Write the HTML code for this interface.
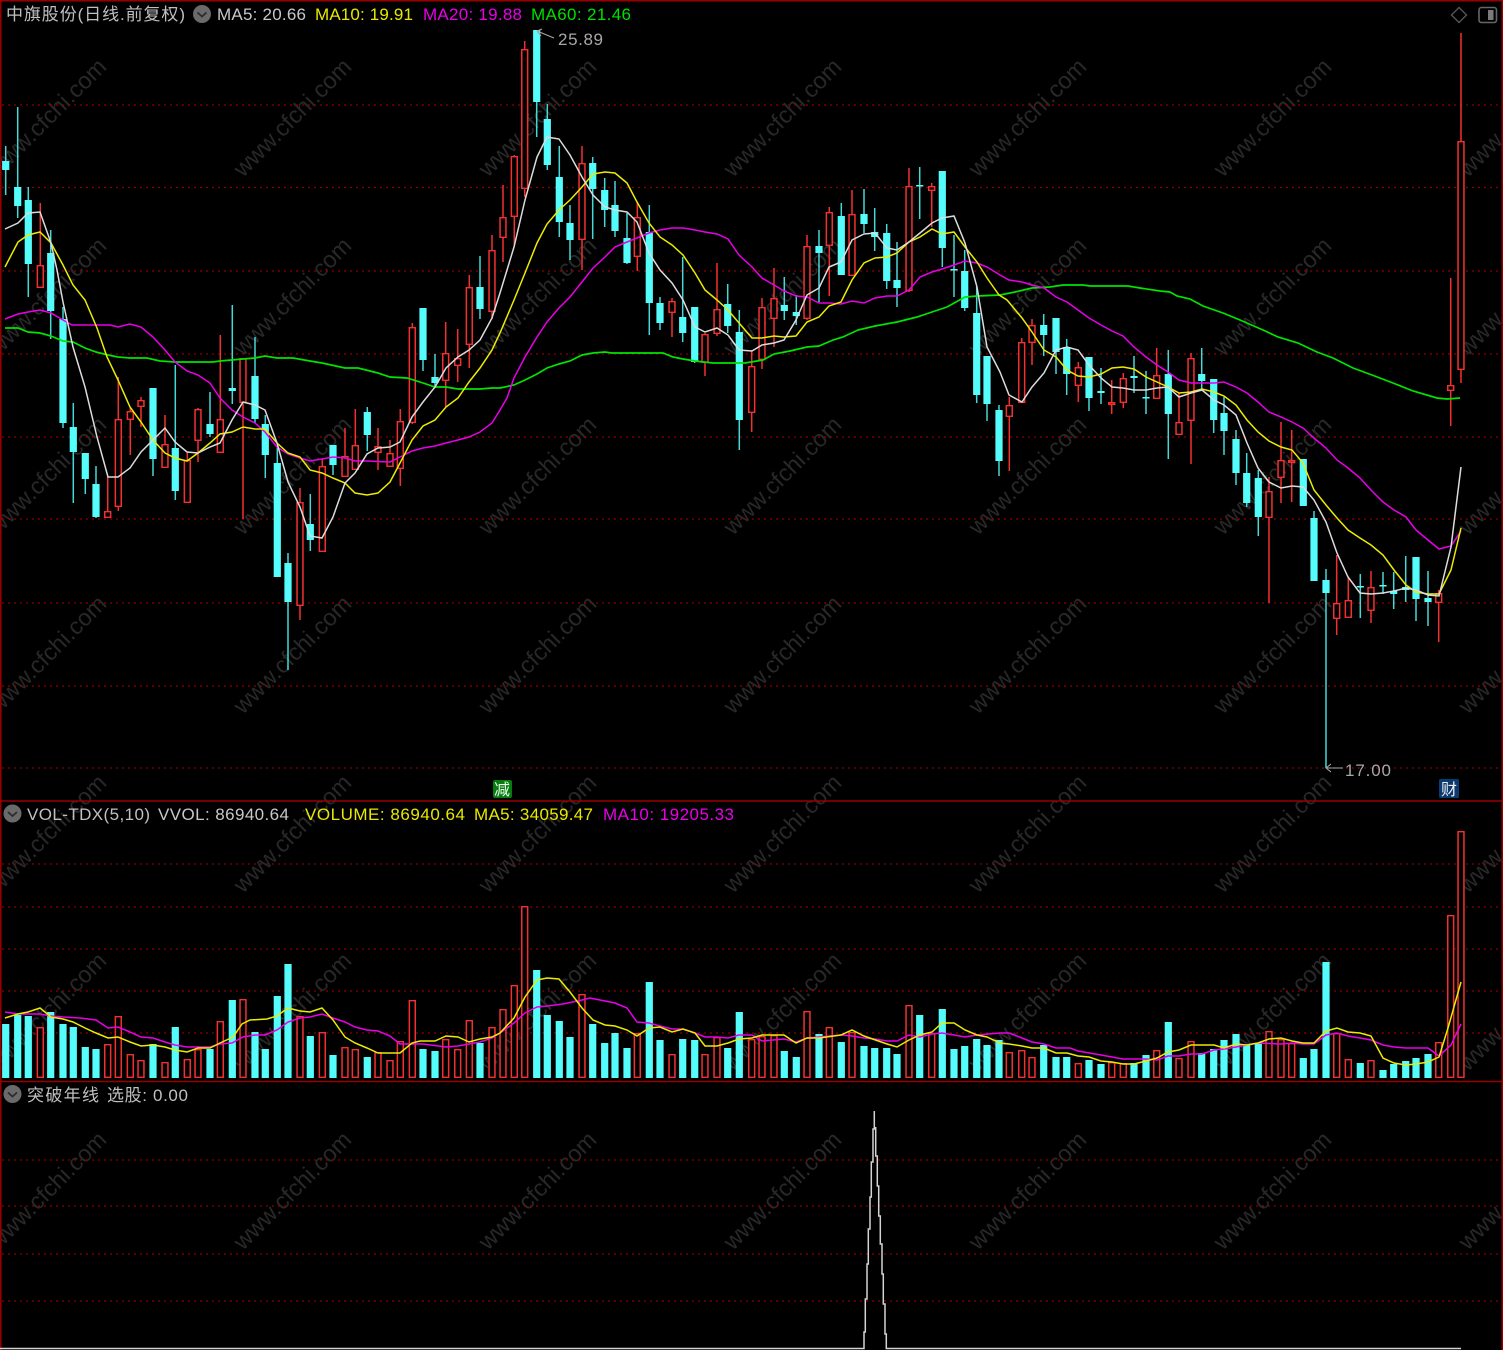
<!DOCTYPE html>
<html><head><meta charset="utf-8"><title>中旗股份</title>
<style>
html,body{margin:0;padding:0;background:#000;width:1503px;height:1350px;overflow:hidden}
svg{display:block;filter:blur(.25px)}
text{font-family:"Liberation Sans","Noto Sans CJK SC",sans-serif;font-size:17px}
.wm text{font-size:23.5px;fill:#282828}
.grid path{stroke:#8c0000;stroke-width:1.3;stroke-dasharray:2 4;fill:none}
</style></head><body>
<svg width="1503" height="1350" viewBox="0 0 1503 1350" xmlns="http://www.w3.org/2000/svg">
<rect width="1503" height="1350" fill="#000"/>
<g class="wm">
<text transform="translate(-2 178) rotate(-45)">www.cfchi.com</text><text transform="translate(243 178) rotate(-45)">www.cfchi.com</text><text transform="translate(488 178) rotate(-45)">www.cfchi.com</text><text transform="translate(733 178) rotate(-45)">www.cfchi.com</text><text transform="translate(978 178) rotate(-45)">www.cfchi.com</text><text transform="translate(1223 178) rotate(-45)">www.cfchi.com</text><text transform="translate(1468 178) rotate(-45)">www.cfchi.com</text>
<text transform="translate(-2 357) rotate(-45)">www.cfchi.com</text><text transform="translate(243 357) rotate(-45)">www.cfchi.com</text><text transform="translate(488 357) rotate(-45)">www.cfchi.com</text><text transform="translate(733 357) rotate(-45)">www.cfchi.com</text><text transform="translate(978 357) rotate(-45)">www.cfchi.com</text><text transform="translate(1223 357) rotate(-45)">www.cfchi.com</text><text transform="translate(1468 357) rotate(-45)">www.cfchi.com</text>
<text transform="translate(-2 536) rotate(-45)">www.cfchi.com</text><text transform="translate(243 536) rotate(-45)">www.cfchi.com</text><text transform="translate(488 536) rotate(-45)">www.cfchi.com</text><text transform="translate(733 536) rotate(-45)">www.cfchi.com</text><text transform="translate(978 536) rotate(-45)">www.cfchi.com</text><text transform="translate(1223 536) rotate(-45)">www.cfchi.com</text><text transform="translate(1468 536) rotate(-45)">www.cfchi.com</text>
<text transform="translate(-2 715) rotate(-45)">www.cfchi.com</text><text transform="translate(243 715) rotate(-45)">www.cfchi.com</text><text transform="translate(488 715) rotate(-45)">www.cfchi.com</text><text transform="translate(733 715) rotate(-45)">www.cfchi.com</text><text transform="translate(978 715) rotate(-45)">www.cfchi.com</text><text transform="translate(1223 715) rotate(-45)">www.cfchi.com</text><text transform="translate(1468 715) rotate(-45)">www.cfchi.com</text>
<text transform="translate(-2 894) rotate(-45)">www.cfchi.com</text><text transform="translate(243 894) rotate(-45)">www.cfchi.com</text><text transform="translate(488 894) rotate(-45)">www.cfchi.com</text><text transform="translate(733 894) rotate(-45)">www.cfchi.com</text><text transform="translate(978 894) rotate(-45)">www.cfchi.com</text><text transform="translate(1223 894) rotate(-45)">www.cfchi.com</text><text transform="translate(1468 894) rotate(-45)">www.cfchi.com</text>
<text transform="translate(-2 1072) rotate(-45)">www.cfchi.com</text><text transform="translate(243 1072) rotate(-45)">www.cfchi.com</text><text transform="translate(488 1072) rotate(-45)">www.cfchi.com</text><text transform="translate(733 1072) rotate(-45)">www.cfchi.com</text><text transform="translate(978 1072) rotate(-45)">www.cfchi.com</text><text transform="translate(1223 1072) rotate(-45)">www.cfchi.com</text><text transform="translate(1468 1072) rotate(-45)">www.cfchi.com</text>
<text transform="translate(-2 1251) rotate(-45)">www.cfchi.com</text><text transform="translate(243 1251) rotate(-45)">www.cfchi.com</text><text transform="translate(488 1251) rotate(-45)">www.cfchi.com</text><text transform="translate(733 1251) rotate(-45)">www.cfchi.com</text><text transform="translate(978 1251) rotate(-45)">www.cfchi.com</text><text transform="translate(1223 1251) rotate(-45)">www.cfchi.com</text><text transform="translate(1468 1251) rotate(-45)">www.cfchi.com</text>
</g>
<g class="grid"><path d="M2 105H1503M2 187.5H1503M2 271H1503M2 354H1503M2 437H1503M2 519H1503M2 603H1503M2 686H1503M2 768H1503M2 864H1503M2 907H1503M2 949H1503M2 991H1503M2 1033H1503M2 1160H1503M2 1206H1503M2 1254H1503M2 1301H1503"/></g>

<!-- borders -->
<path d="M0 .7H1503M.7 0V1350M1502.3 0V1350M0 801H1503M0 1081.5H1503" stroke="#980000" stroke-width="1.6" fill="none"/>

<!-- candle wicks -->
<path fill="none" stroke="#45d8d8" stroke-width="1.5" d="M5.7 146V195M17.7 107V218M28.3 187V297M50.7 230V339M63 307V428M73.3 403V503M85.3 453V494M96 466V518M153 388V476M175.3 365V500M210 392V437M232.3 305V404M255 337V423M265.3 415V478M277.3 448V577M288 553V670M310.3 494V551M333 445V475M367.3 407V451M423 308V371M435 354V388M480 256V319M536.7 30V137M547.3 104V170M559.3 146V237M570 205V260M592.7 157V239M604.7 178V227M615 181V237M627 213V264M649.3 205V335M660 297V330M682.7 257V342M694.7 307V363M727.7 284V333M739.3 310V450M784.3 277V320M796.3 295V325M819 230V302M841.3 203V275M864 189V233M874.7 208V251M886.7 224V289M897 242V307M919.7 167V219M942.3 171V267M954 235V297M964.7 250V311M976.7 287V403M987 357V421M999 405V476M1043.7 314V356M1056 318V374M1066.7 339V395M1089 357V411M1101 368V404M1134 356V393M1146 371V414M1168.3 350V459M1201.7 348V390M1213.7 379V433M1224 397V455M1236 430V485M1246.7 453V507M1258.3 470V536M1314 511V581M1326 569V768M1360.3 574V618M1383 572V594M1393.7 572V609M1405.7 556V602M1416 557V621M1428 571V626"/>
<path fill="none" stroke="#f23030" stroke-width="1.5" d="M40.3 203V288M107.7 477V518M118.3 377V511M130.3 408V455M141 397V427M165 415V468M187.3 452V503M198 408V462M220.3 335V453M243 358V519M300 488V620M322.3 459V552M345 428V477M355.3 409V470M378 428V470M390 440V467M400.3 409V486M412.3 323V424M445.7 322V407M457.7 329V382M469.3 275V368M492 235V319M503 185V262M514.3 155V245M524.7 41V197M582 146V270M637.3 202V271M672 298V337M705 333V376M717 263V336M751.7 350V432M762 298V369M774 268V347M807 235V320M829.3 207V296M852 190V276M909 168V292M931.7 183V227M1009.3 397V471M1021.7 338V403M1032 319V365M1078.3 362V402M1111.7 380V414M1123.3 373V408M1156.7 348V399M1179 393V435M1191 353V464M1269 477V603M1281 422V503M1291.7 430V502M1336.7 555V635M1348.3 577V618M1371 571V623M1438.7 590V642M1450.7 278V426M1461 33V383"/>
<!-- candle bodies -->
<path fill="none" stroke="#55fcfc" stroke-width="7.2" d="M5.7 161V170M17.7 187V206M28.3 200V264M50.7 253V311M63 319V423M73.3 427V452M85.3 453V479M96 484V517M153 388V459M175.3 448V491M210 424V434M232.3 388V391M255 376V419M265.3 424V455M277.3 463V577M288 563V602M310.3 524V540M333 445V465M367.3 412V435M423 308V360M435 377V383M480 287V309M536.7 30V102M547.3 119V165M559.3 177V222M570 223V240M592.7 163V189M604.7 190V210M615 205V231M627 238V263M649.3 232V303M660 303V323M682.7 317V333M694.7 307V362M727.7 304V326M739.3 332V420M784.3 305V311M796.3 312V316M819 246V253M841.3 216V275M864 214V224M874.7 232V237M886.7 233V281M897 280V288M919.7 185V186.5M942.3 171V248M954 269V270.5M964.7 271V308M976.7 313V395M987 356V404M999 410V461M1043.7 325V335M1056 318V352M1066.7 347V374M1089 357V398M1101 391V393M1134 376V378M1146 397V398.5M1168.3 374V414M1201.7 374V381M1213.7 379V420M1224 413V431M1236 439V473M1246.7 473V503M1258.3 478V517M1303.3 459V506M1314 518V581M1326 580V593M1360.3 586V587.5M1383 585V586.5M1393.7 591V594M1405.7 587V590M1416 557V599M1428 598V602"/>
<path fill="none" stroke="#f23030" stroke-width="7.4" d="M40.3 265V288M107.7 511V518M118.3 419V507M130.3 411V420M141 400V407M165 444V468M187.3 460V503M198 409V441M220.3 419V453M243 358V403M300 502V606M322.3 466V552M345 456V477M355.3 445V470M378 446V453M390 453V467M400.3 421V469M412.3 327V423M445.7 353V381M457.7 358V366M469.3 287V345M492 250V312M503 217V238M514.3 156V217M524.7 49V189M582 163V240M637.3 217V257M672 301V313M705 334V363M717 309V334M751.7 366V413M762 307V360M774 298V319M807 246V319M829.3 212V246M852 214V276M909 186V291M931.7 186V191M1009.3 405V417M1021.7 342V403M1032 325V343M1078.3 367V386M1111.7 402V405M1123.3 378V403M1156.7 375V399M1179 422V435M1191 358V421M1269 491V518M1281 460V478M1291.7 460V463M1336.7 603V619M1348.3 600V618M1371 587V611M1438.7 593V603M1450.7 385V391M1461 141V370"/>
<path fill="none" stroke="#000" stroke-width="4.4" d="M40.3 266.4V286.6M107.7 512.4V516.6M118.3 420.4V505.6M130.3 412.4V418.6M141 401.4V405.6M165 445.4V466.6M187.3 461.4V501.6M198 410.4V439.6M220.3 420.4V451.6M243 359.4V401.6M300 503.4V604.6M322.3 467.4V550.6M345 457.4V475.6M355.3 446.4V468.6M378 447.4V451.6M390 454.4V465.6M400.3 422.4V467.6M412.3 328.4V421.6M445.7 354.4V379.6M457.7 359.4V364.6M469.3 288.4V343.6M492 251.4V310.6M503 218.4V236.6M514.3 157.4V215.6M524.7 50.4V187.6M582 164.4V238.6M637.3 218.4V255.6M672 302.4V311.6M705 335.4V361.6M717 310.4V332.6M751.7 367.4V411.6M762 308.4V358.6M774 299.4V317.6M807 247.4V317.6M829.3 213.4V244.6M852 215.4V274.6M909 187.4V289.6M931.7 187.4V189.6M1009.3 406.4V415.6M1021.7 343.4V401.6M1032 326.4V341.6M1078.3 368.4V384.6M1111.7 403.4V403.6M1123.3 379.4V401.6M1156.7 376.4V397.6M1179 423.4V433.6M1191 359.4V419.6M1269 492.4V516.6M1281 461.4V476.6M1291.7 461.4V461.6M1336.7 604.4V617.6M1348.3 601.4V616.6M1371 588.4V609.6M1438.7 594.4V601.6M1450.7 386.4V389.6M1461 142.4V368.6"/>

<!-- MA lines main -->
<polyline fill="none" stroke="#00e400" stroke-width="1.7" points="5,328 18,328 28,332 40,333 51,336 63,341 73,342 85,348 96,352 108,355 118,357 130,358 147,358 160,361 175,362 213,362 220,361 243,359 255,358 265,356 277,358 293,358 310,361 322,363 345,368 358,368 378,373 390,377 407,378 423,383 435,387 446,387 458,389 480,389 492,388 500,388 514,385 525,380 537,374 547,368 559,364 570,361 582,355 593,353 605,352 612,353 663,353 673,357 683,359 695,361 713,363 745,363 763,360 774,354 790,351 807,347 819,346 833,340 843,337 858,330 875,326 897,322 917,317 932,312 947,307 965,297 977,296 1000,295 1015,292 1032,288 1050,287 1063,285 1083,285 1090,286 1128,286 1140,288 1160,291 1170,292 1177,296 1190,299 1203,306 1223,313 1240,320 1263,330 1278,337 1298,343 1317,352 1333,358 1353,368 1372,375 1393,383 1413,391 1437,398 1447,399 1460,398"/>
<polyline fill="none" stroke="#e800e8" stroke-width="1.5" points="5,319 18,314 28,312 40,310 51,313 63,320 72,325 85,325 110,325 118,327 130,324 141,327 153,337 165,350 175,362 187,371 198,375 210,383 220,398 232,410 243,417 255,423 265,432 277,447 288,454 300,458 310,461 322,459 333,457 345,458 355,461 367,461 390,462 400,457 412,451 423,448 435,446 446,443 458,440 469,437 480,432 492,423 500,410 507,398 514,378 525,357 537,337 547,322 559,308 570,297 582,282 593,268 605,257 615,247 627,242 637,238 649,233 660,230 672,228 683,228 695,230 705,232 717,234 728,239 739,255 752,267 762,278 774,285 784,291 796,296 807,297 819,303 829,303 841,304 852,301 864,303 875,298 887,296 897,296 909,290 920,277 932,272 942,269 954,265 965,261 977,263 987,267 1000,275 1009,280 1022,282 1032,285 1044,288 1056,297 1067,302 1078,310 1089,318 1101,325 1112,331 1123,336 1134,347 1146,357 1157,365 1168,372 1179,380 1191,383 1202,383 1214,383 1224,382 1236,387 1247,393 1258,402 1269,412 1281,417 1292,422 1303,428 1314,438 1326,448 1337,460 1348,468 1360,478 1371,490 1383,502 1394,510 1406,517 1416,530 1428,540 1439,549 1451,546 1461,531"/>
<polyline fill="none" stroke="#ecec00" stroke-width="1.5" points="5,267 18,242 28,235 40,232 51,243 63,265 73,285 85,300 97,328 107,357 118,380 130,407 141,422 153,440 165,453 175,458 187,461 198,453 210,443 220,434 232,432 243,427 255,429 265,429 277,443 288,453 300,457 310,470 322,473 333,478 345,483 355,493 367,495 378,493 390,482 400,463 412,440 423,426 435,420 446,407 458,398 469,382 480,368 492,350 500,333 514,300 525,273 537,243 547,224 559,210 570,200 582,187 593,174 605,172 615,173 627,183 637,202 649,223 660,237 672,245 683,255 695,273 705,290 717,300 728,310 739,323 752,338 762,338 774,336 784,337 796,336 807,322 819,317 829,306 841,302 852,280 864,263 875,258 887,257 897,253 909,242 920,237 932,229 942,234 954,232 965,247 977,262 987,278 999,295 1007,300 1022,318 1032,332 1044,350 1056,357 1067,370 1078,376 1089,377 1101,374 1112,368 1123,367 1134,369 1146,377 1157,382 1168,387 1179,393 1191,392 1202,389 1214,392 1224,396 1236,405 1247,420 1258,432 1269,441 1281,447 1292,450 1303,463 1314,490 1326,505 1337,518 1348,530 1360,538 1371,545 1383,555 1394,570 1406,585 1416,592 1428,594 1439,594 1451,570 1461,528"/>
<polyline fill="none" stroke="#dcdcdc" stroke-width="1.5" points="5,229 18,223 28,213 40,212 51,243 57,270 63,302 73,347 85,387 97,437 108,477 118,477 130,468 141,452 153,440 165,428 175,442 187,452 198,453 210,447 220,443 232,420 243,402 255,405 265,410 277,443 288,482 300,507 310,536 322,538 333,517 345,483 355,473 367,454 378,448 390,447 400,442 412,417 423,402 435,387 446,368 458,357 469,350 480,340 492,318 500,293 514,247 525,200 537,157 547,137 559,139 570,155 582,177 593,195 605,207 615,210 627,212 637,222 649,253 660,270 672,283 683,300 695,327 705,332 717,328 728,335 739,350 752,351 762,345 774,343 784,340 796,320 807,295 819,288 829,267 841,262 852,240 864,234 875,233 887,248 897,250 909,242 920,233 932,223 942,218 954,216 965,243 977,287 987,347 1000,372 1009,395 1022,402 1032,387 1044,373 1056,350 1067,347 1078,350 1089,365 1101,378 1112,387 1123,388 1134,390 1146,390 1157,388 1168,387 1179,397 1191,393 1202,390 1214,400 1224,405 1236,415 1247,443 1258,468 1269,482 1281,488 1292,486 1303,487 1314,500 1326,522 1337,553 1348,577 1360,593 1371,594 1383,593 1394,591 1406,588 1416,590 1428,595 1439,596 1451,547 1461,467"/>

<!-- volume bars -->
<path fill="none" stroke="#55fcfc" stroke-width="7.2" d="M5.7 1024V1078M17.7 1015V1078M28.3 1016V1078M50.7 1012V1078M63 1024V1078M73.3 1027V1078M85.3 1047V1078M96 1049V1078M153 1044V1078M175.3 1027V1078M210 1049V1078M232.3 1000V1078M255 1032V1078M265.3 1049V1078M277.3 996V1078M288 964V1078M310.3 1036V1078M333 1055V1078M367.3 1057V1078M423 1049V1078M435 1051V1078M480 1043V1078M536.7 970V1078M547.3 1015V1078M559.3 1021V1078M570 1037V1078M592.7 1024V1078M604.7 1043V1078M615 1033V1078M627 1048V1078M649.3 982V1078M660 1040V1078M682.7 1039V1078M694.7 1040V1078M727.7 1048V1078M739.3 1012V1078M784.3 1051V1078M796.3 1057V1078M819 1034V1078M841.3 1042V1078M864 1046V1078M874.7 1048V1078M886.7 1048V1078M897 1054V1078M919.7 1015V1078M942.3 1009V1078M954 1049V1078M964.7 1046V1078M976.7 1039V1078M987 1045V1078M999 1040V1078M1043.7 1045V1078M1056 1057V1078M1066.7 1057V1078M1089 1060V1078M1101 1064V1078M1134 1063V1078M1146 1055V1078M1168.3 1022V1078M1201.7 1053V1078M1213.7 1049V1078M1224 1040V1078M1236 1034V1078M1246.7 1045V1078M1258.3 1043V1078M1303.3 1058V1078M1314 1049V1078M1326 962V1078M1360.3 1063V1078M1383 1070V1078M1393.7 1064V1078M1405.7 1061V1078M1416 1058V1078M1428 1054V1078"/>
<path fill="none" stroke="#f23030" stroke-width="7.4" d="M40.3 1027V1078M107.7 1044V1078M118.3 1016V1078M130.3 1054V1078M141 1060V1078M165 1062V1078M187.3 1059V1078M198 1049V1078M220.3 1021V1078M243 999V1078M300 1016V1078M322.3 1032V1078M345 1047V1078M355.3 1049V1078M378 1052V1078M390 1060V1078M400.3 1041V1078M412.3 1000V1078M445.7 1039V1078M457.7 1049V1078M469.3 1020V1078M492 1027V1078M503 1009V1078M514.3 985V1078M524.7 906V1078M582 994V1078M637.3 1033V1078M672 1054V1078M705 1054V1078M717 1037V1078M751.7 1039V1078M762 1036V1078M774 1035V1078M807 1011V1078M829.3 1027V1078M852 1032V1078M909 1005V1078M931.7 1033V1078M1009.3 1052V1078M1021.7 1050V1078M1032 1057V1078M1078.3 1063V1078M1111.7 1062V1078M1123.3 1063V1078M1156.7 1050V1078M1179 1058V1078M1191 1041V1078M1269 1031V1078M1281 1039V1078M1291.7 1043V1078M1336.7 1033V1078M1348.3 1059V1078M1371 1060V1078M1438.7 1042V1078M1450.7 915V1078M1461 831V1078"/>
<path fill="none" stroke="#000" stroke-width="4.4" d="M40.3 1028.4V1076.6M107.7 1045.4V1076.6M118.3 1017.4V1076.6M130.3 1055.4V1076.6M141 1061.4V1076.6M165 1063.4V1076.6M187.3 1060.4V1076.6M198 1050.4V1076.6M220.3 1022.4V1076.6M243 1000.4V1076.6M300 1017.4V1076.6M322.3 1033.4V1076.6M345 1048.4V1076.6M355.3 1050.4V1076.6M378 1053.4V1076.6M390 1061.4V1076.6M400.3 1042.4V1076.6M412.3 1001.4V1076.6M445.7 1040.4V1076.6M457.7 1050.4V1076.6M469.3 1021.4V1076.6M492 1028.4V1076.6M503 1010.4V1076.6M514.3 986.4V1076.6M524.7 907.4V1076.6M582 995.4V1076.6M637.3 1034.4V1076.6M672 1055.4V1076.6M705 1055.4V1076.6M717 1038.4V1076.6M751.7 1040.4V1076.6M762 1037.4V1076.6M774 1036.4V1076.6M807 1012.4V1076.6M829.3 1028.4V1076.6M852 1033.4V1076.6M909 1006.4V1076.6M931.7 1034.4V1076.6M1009.3 1053.4V1076.6M1021.7 1051.4V1076.6M1032 1058.4V1076.6M1078.3 1064.4V1076.6M1111.7 1063.4V1076.6M1123.3 1064.4V1076.6M1156.7 1051.4V1076.6M1179 1059.4V1076.6M1191 1042.4V1076.6M1269 1032.4V1076.6M1281 1040.4V1076.6M1291.7 1044.4V1076.6M1336.7 1034.4V1076.6M1348.3 1060.4V1076.6M1371 1061.4V1076.6M1438.7 1043.4V1076.6M1450.7 916.4V1076.6M1461 832.4V1076.6"/>
<!-- volume MAs -->
<polyline fill="none" stroke="#e800e8" stroke-width="1.5" points="5,1012 18,1014 40,1014 51,1016 63,1017 80,1018 96,1020 108,1028 118,1027 130,1032 141,1037 153,1038 165,1042 175,1045 187,1047 210,1047 220,1044 232,1043 243,1037 255,1035 265,1035 277,1030 288,1022 300,1018 310,1017 322,1014 333,1018 345,1022 355,1027 367,1030 378,1031 390,1036 400,1044 412,1044 423,1044 446,1047 458,1046 480,1042 492,1038 500,1033 514,1023 525,1013 537,1007 547,1006 563,1004 582,1000 590,998 605,1001 615,1003 627,1008 637,1022 649,1023 660,1026 672,1029 683,1029 695,1033 705,1037 717,1037 728,1038 739,1035 752,1035 762,1041 784,1039 796,1042 807,1038 819,1037 841,1035 852,1036 864,1038 875,1039 887,1041 897,1041 909,1035 920,1037 932,1034 942,1033 954,1035 965,1037 977,1035 1000,1033 1009,1033 1022,1038 1032,1042 1044,1044 1056,1048 1070,1048 1078,1051 1101,1055 1123,1059 1146,1059 1157,1060 1168,1056 1179,1056 1191,1054 1202,1054 1214,1050 1224,1049 1236,1047 1258,1043 1281,1044 1292,1043 1303,1044 1314,1044 1326,1035 1337,1033 1348,1036 1360,1038 1371,1040 1383,1045 1394,1047 1406,1048 1428,1048 1439,1056 1451,1045 1461,1024"/>
<polyline fill="none" stroke="#ecec00" stroke-width="1.5" points="5,1018 18,1014 28,1012 40,1008 51,1017 63,1019 73,1022 85,1028 96,1033 108,1038 118,1037 130,1042 141,1046 153,1045 165,1047 175,1050 187,1052 198,1048 210,1048 220,1043 233,1037 242,1024 250,1020 267,1019 277,1016 288,1008 300,1011 310,1012 322,1008 333,1020 345,1037 355,1043 367,1048 378,1053 400,1053 412,1043 420,1041 435,1041 446,1036 458,1037 469,1042 480,1039 492,1037 500,1033 514,1018 525,997 537,980 547,978 559,979 570,992 582,1008 593,1020 605,1025 615,1026 627,1030 637,1036 649,1028 660,1027 672,1032 683,1029 695,1033 705,1046 717,1046 728,1043 739,1039 752,1038 762,1035 784,1035 796,1043 807,1038 819,1038 841,1035 852,1030 864,1036 887,1044 897,1047 909,1040 920,1035 932,1032 942,1023 954,1023 965,1030 977,1035 987,1037 1000,1043 1009,1044 1022,1046 1032,1048 1044,1048 1056,1053 1067,1053 1078,1056 1089,1057 1101,1061 1112,1062 1123,1064 1134,1064 1146,1061 1157,1058 1168,1052 1179,1050 1191,1045 1214,1045 1224,1048 1236,1044 1247,1045 1258,1043 1269,1039 1281,1038 1292,1041 1303,1043 1314,1043 1326,1031 1337,1028 1348,1032 1360,1033 1371,1036 1377,1047 1383,1058 1394,1063 1406,1065 1416,1064 1428,1062 1439,1057 1448,1028 1461,982"/>

<!-- bottom indicator -->
<path fill="none" stroke="#d4d4d4" stroke-width="1.5" d="M0 1348.5H864V1332H865.3V1299H867V1264H868.3V1229H870V1197H871.3V1162H873V1129H874.3V1111M875.7 1127V1156H877.3V1186H878.7V1216H880.3V1244H882V1274H883.3V1304H885V1334H886.3V1348.5H1461"/>

<!-- annotations -->
<path fill="none" stroke="#a8a8a8" stroke-width="1.1" d="M537 31L554 38M537 31L542 29M537 31L541 36M1326 768H1343M1326 768L1331 764M1326 768L1331 772"/>
<text x="558" y="45" fill="#a8a8a8" textLength="45" lengthAdjust="spacing">25.89</text>
<text x="1345" y="776" fill="#a8a8a8" textLength="46" lengthAdjust="spacing">17.00</text>

<!-- badges -->
<rect x="493" y="780" width="19" height="18" rx="2" fill="#087a10"/>
<text x="494" y="795" fill="#e8ffe8" style="font-size:16px" textLength="17">减</text>
<rect x="1439" y="779" width="20" height="19" rx="1.5" fill="#0b3a70"/>
<text x="1441" y="795" fill="#f0f0f0" style="font-size:16px" textLength="17">财</text>

<!-- top texts -->
<text x="6" y="20" fill="#c0c0c0" textLength="179" lengthAdjust="spacing">中旗股份(日线.前复权)</text>
<circle cx="202" cy="14" r="9" fill="#6a6a6a"/><path d="M197.5 12.5L202 16.5L206.5 12.5" fill="none" stroke="#2c2c2c" stroke-width="1.8"/>
<text x="217" y="20" fill="#c8c8c8" textLength="89" lengthAdjust="spacing">MA5: 20.66</text>
<text x="315" y="20" fill="#e8e800" textLength="98" lengthAdjust="spacing">MA10: 19.91</text>
<text x="423" y="20" fill="#e800e8" textLength="99" lengthAdjust="spacing">MA20: 19.88</text>
<text x="531" y="20" fill="#00e000" textLength="100" lengthAdjust="spacing">MA60: 21.46</text>

<path d="M1459 7.5L1466.5 15L1459 22.5L1451.5 15Z" fill="none" stroke="#555" stroke-width="1.4"/>
<rect x="1479" y="7.5" width="17.5" height="15" rx="2.5" fill="none" stroke="#666" stroke-width="1.6"/>
<rect x="1488" y="10" width="5.5" height="10" fill="#7a7a7a"/>

<!-- volume text -->
<circle cx="12.5" cy="813.5" r="9" fill="#6a6a6a"/><path d="M8 812L12.5 816L17 812" fill="none" stroke="#2c2c2c" stroke-width="1.8"/>
<text x="27" y="820" fill="#c0c0c0" textLength="123" lengthAdjust="spacing">VOL-TDX(5,10)</text>
<text x="158" y="820" fill="#c8c8c8" textLength="131" lengthAdjust="spacing">VVOL: 86940.64</text>
<text x="305" y="820" fill="#e8e800" textLength="160" lengthAdjust="spacing">VOLUME: 86940.64</text>
<text x="474" y="820" fill="#e8e800" textLength="119" lengthAdjust="spacing">MA5: 34059.47</text>
<text x="603" y="820" fill="#e800e8" textLength="131" lengthAdjust="spacing">MA10: 19205.33</text>

<!-- indicator text -->
<circle cx="12.5" cy="1094" r="9" fill="#6a6a6a"/><path d="M8 1092.5L12.5 1096.5L17 1092.5" fill="none" stroke="#2c2c2c" stroke-width="1.8"/>
<text x="27" y="1101" fill="#c0c0c0" textLength="72" lengthAdjust="spacing">突破年线</text>
<text x="107" y="1101" fill="#c0c0c0" textLength="81" lengthAdjust="spacing">选股: 0.00</text>
</svg>
</body></html>
